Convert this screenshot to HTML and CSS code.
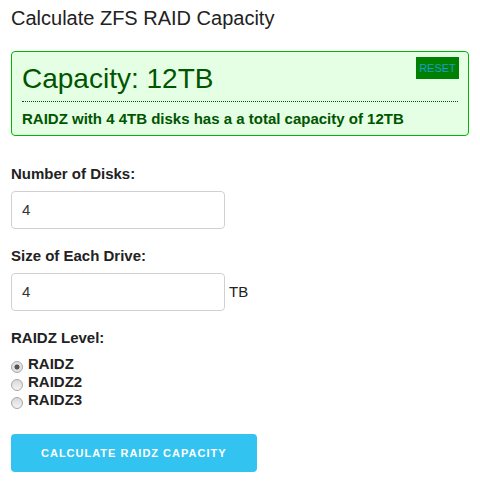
FILE: index.html
```html
<!DOCTYPE html>
<html>
<head>
<meta charset="utf-8">
<link rel="stylesheet" href="styles.css">
</head>
<body>
<div class="page">
  <h1 class="title">Calculate ZFS RAID Capacity</h1>
  <div class="result">
    <button class="reset" type="button">Reset</button>
    <h2 class="capacity">Capacity: 12TB</h2>
    <p class="summary">RAIDZ with 4 4TB disks has a a total capacity of 12TB</p>
  </div>
  <form class="form">
    <label class="label" for="disks">Number of Disks:</label>
    <input class="input" id="disks" type="text" value="4">
    <label class="label" for="size">Size of Each Drive:</label>
    <div class="input-row"><input class="input" id="size" type="text" value="4"> TB</div>
    <label class="label">RAIDZ Level:</label>
    <div class="radios">
      <label class="radio"><input type="radio" name="level" checked>RAIDZ</label>
      <label class="radio"><input type="radio" name="level">RAIDZ2</label>
      <label class="radio"><input type="radio" name="level">RAIDZ3</label>
    </div>
    <button class="calc" type="button">Calculate RAIDZ Capacity</button>
  </form>
</div>
</body>
</html>
```
FILE: styles.css
```css
html, body {
  margin: 0;
  padding: 0;
  background: #fff;
}
body {
  font-family: "Liberation Sans", Arial, sans-serif;
  color: #222;
  font-size: 15px;
  line-height: 1.6;
}
.page {
  padding: 0 11px;
}
.title {
  margin: 0;
  padding-top: 6px;
  font-size: 20px;
  font-weight: normal;
  line-height: 24px;
  color: #222;
}
.result {
  position: relative;
  margin-top: 21px;
  background: #e5ffe5;
  border: 1px solid #00b800;
  border-radius: 4px;
  padding: 10px 10px 4px 10px;
  color: #005500;
}
.capacity {
  margin: 0;
  font-size: 28px;
  font-weight: normal;
  line-height: 33.6px;
  padding-bottom: 5px;
  border-bottom: 1px dotted #005500;
}
.summary {
  margin: 5px 0 0 0;
  font-size: 15px;
  font-weight: bold;
  line-height: 24px;
}
.reset {
  position: absolute;
  top: 5px;
  right: 9px;
  width: 43px;
  height: 22px;
  padding: 0;
  border: none;
  background: #008000;
  color: #1e9bd0;
  font-family: "Liberation Sans", Arial, sans-serif;
  font-size: 11px;
  text-transform: uppercase;
  line-height: 22px;
}
.form {
  margin: 26px 0 0 0;
}
.label {
  display: block;
  font-weight: bold;
  line-height: 24px;
  margin-bottom: 5px;
}
.input {
  box-sizing: border-box;
  width: 214px;
  height: 38px;
  padding: 6px 10px;
  border: 1px solid #d1d1d1;
  border-radius: 4px;
  font-family: "Liberation Sans", Arial, sans-serif;
  font-size: 15px;
  color: #333;
  margin: 0 0 15px 0;
  display: block;
  outline: none;
}
.input-row {
  display: flex;
  align-items: center;
  gap: 4px;
  margin-bottom: 15px;
  height: 38px;
}
.input-row .input {
  margin: 0;
}
.radios {
  display: flex;
  flex-direction: column;
  font-weight: bold;
  line-height: 18px;
}
.radio {
  display: flex;
  align-items: flex-start;
  height: 18px;
}
.radio input {
  appearance: none;
  -webkit-appearance: none;
  box-sizing: border-box;
  width: 12px;
  height: 12px;
  margin: 6px 5px 0 0;
  border: 1px solid #a6a6a6;
  border-radius: 50%;
  background: linear-gradient(#d9d9d9, #f4f4f4);
}
.radio input:checked {
  background: radial-gradient(circle, #555 0, #555 2.2px, #dcdcdc 2.8px, #f0f0f0 100%);
}
.calc {
  display: block;
  margin-top: 25px;
  height: 38px;
  padding: 0 30px;
  border: none;
  border-radius: 4px;
  background: #33c3f0;
  color: #fff;
  font-family: "Liberation Sans", Arial, sans-serif;
  font-size: 11px;
  font-weight: bold;
  letter-spacing: 1px;
  text-transform: uppercase;
  line-height: 38px;
}
```
